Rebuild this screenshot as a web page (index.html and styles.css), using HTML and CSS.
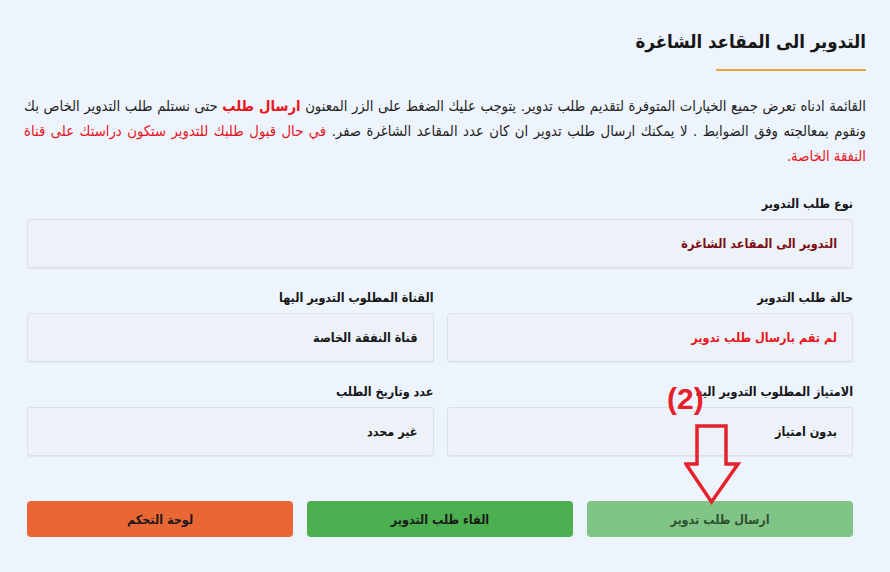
FILE: index.html
```html
<!DOCTYPE html>
<html lang="ar" dir="rtl">
<head>
<meta charset="utf-8">
<title>التدوير الى المقاعد الشاغرة</title>
<link rel="stylesheet" href="styles.css">
</head>
<body>
<div class="page">
  <header class="head">
    <h1 class="title">التدوير الى المقاعد الشاغرة</h1>
    <div class="rule"></div>
  </header>
  <p class="intro">القائمة ادناه تعرض جميع الخيارات المتوفرة لتقديم طلب تدوير. يتوجب عليك الضغط على الزر المعنون <b class="hot">ارسال طلب</b> حتى نستلم طلب التدوير الخاص بك ونقوم بمعالجته وفق الضوابط . لا يمكنك ارسال طلب تدوير ان كان عدد المقاعد الشاغرة صفر. <span class="warn">في حال قبول طلبك للتدوير ستكون دراستك على قناة النفقة الخاصة.</span></p>

  <div class="form">
    <div class="field full">
      <div class="label">نوع طلب التدوير</div>
      <div class="box maroon">التدوير الى المقاعد الشاغرة</div>
    </div>
    <div class="field">
      <div class="label">حالة طلب التدوير</div>
      <div class="box red">لم تقم بارسال طلب تدوير</div>
    </div>
    <div class="field">
      <div class="label">القناة المطلوب التدوير اليها</div>
      <div class="box">قناة النفقة الخاصة</div>
    </div>
    <div class="field">
      <div class="label">الامتياز المطلوب التدوير اليه</div>
      <div class="box">بدون امتياز</div>
    </div>
    <div class="field">
      <div class="label">عدد وتاريخ الطلب</div>
      <div class="box">غير محدد</div>
    </div>
  </div>

  <div class="actions">
    <button class="btn send">ارسال طلب تدوير</button>
    <button class="btn cancel">الفاء طلب التدوير</button>
    <button class="btn panel">لوحة التحكم</button>
  </div>

  <div class="callout">
    <span class="num">(2)</span>
    <svg class="arrow" width="58" height="82" viewBox="0 0 58 82">
      <path d="M13 2 H42 V40 H54 L27.5 78 L2 40 H13 Z" fill="none" stroke="#e5212b" stroke-width="3.5" stroke-linejoin="miter"/>
    </svg>
  </div>
</div>
</body>
</html>
```
FILE: styles.css
```css
html, body {
  margin: 0;
  padding: 0;
}
body {
  background: #eef4fd;
  font-family: "DejaVu Sans Condensed", "DejaVu Sans", sans-serif;
  font-stretch: condensed;
  color: #1c1c1c;
}
.page {
  position: relative;
  width: 890px;
  height: 572px;
  box-sizing: border-box;
  padding: 27px 24px 0 24px;
  overflow: hidden;
}
.head {
  display: flex;
  flex-direction: column;
  align-items: flex-start;
}
.title {
  margin: 0;
  font-size: 18.5px;
  line-height: 30px;
  font-weight: bold;
  color: #161616;
}
.rule {
  width: 150px;
  height: 2px;
  background: #e6a83a;
  margin-top: 12px;
}
.intro {
  margin: 22px 0 0 0;
  font-size: 14.7px;
  line-height: 25px;
  text-align: justify;
  color: #1f1f1f;
}
.hot {
  color: #e8151b;
}
.warn {
  color: #e8151b;
}
.form {
  margin: 26px 13px 0 3px;
  display: grid;
  grid-template-columns: 1fr 1fr;
  column-gap: 13px;
  row-gap: 20px;
}
.field.full {
  grid-column: 1 / span 2;
}
.label {
  font-size: 12.5px;
  font-weight: bold;
  line-height: 20px;
  color: #151515;
  margin-bottom: 5px;
}
.box {
  height: 49px;
  box-sizing: border-box;
  border: 1px solid #dbe0e6;
  border-radius: 3px;
  background: #edf2f9;
  box-shadow: 0 1px 1px rgba(0,0,0,0.06);
  padding: 0 15px;
  display: flex;
  align-items: center;
  font-size: 12.5px;
  font-weight: bold;
  color: #141414;
}
.box.maroon { color: #7d0b10; }
.box.red { color: #e8151b; }
.actions {
  margin: 45px 13px 0 3px;
  display: flex;
  gap: 14px;
}
.btn {
  flex: 1;
  height: 36px;
  border: none;
  border-radius: 4px;
  font-family: inherit;
  font-stretch: condensed;
  font-size: 12.5px;
  font-weight: bold;
  color: #1a1a1a;
}
.btn.send { background: #80c585; color: #2f4f31; }
.btn.cancel { background: #4caf50; }
.btn.panel { background: #e96734; }
.callout {
  position: absolute;
  left: 667px;
  top: 383px;
  width: 80px;
  height: 125px;
}
.num {
  position: absolute;
  left: 0;
  top: 0;
  font-family: "Liberation Sans", sans-serif;
  font-stretch: normal;
  font-weight: bold;
  font-size: 30px;
  line-height: 32px;
  color: #e5212b;
  direction: ltr;
}
.arrow {
  position: absolute;
  left: 17px;
  top: 41px;
}
```
